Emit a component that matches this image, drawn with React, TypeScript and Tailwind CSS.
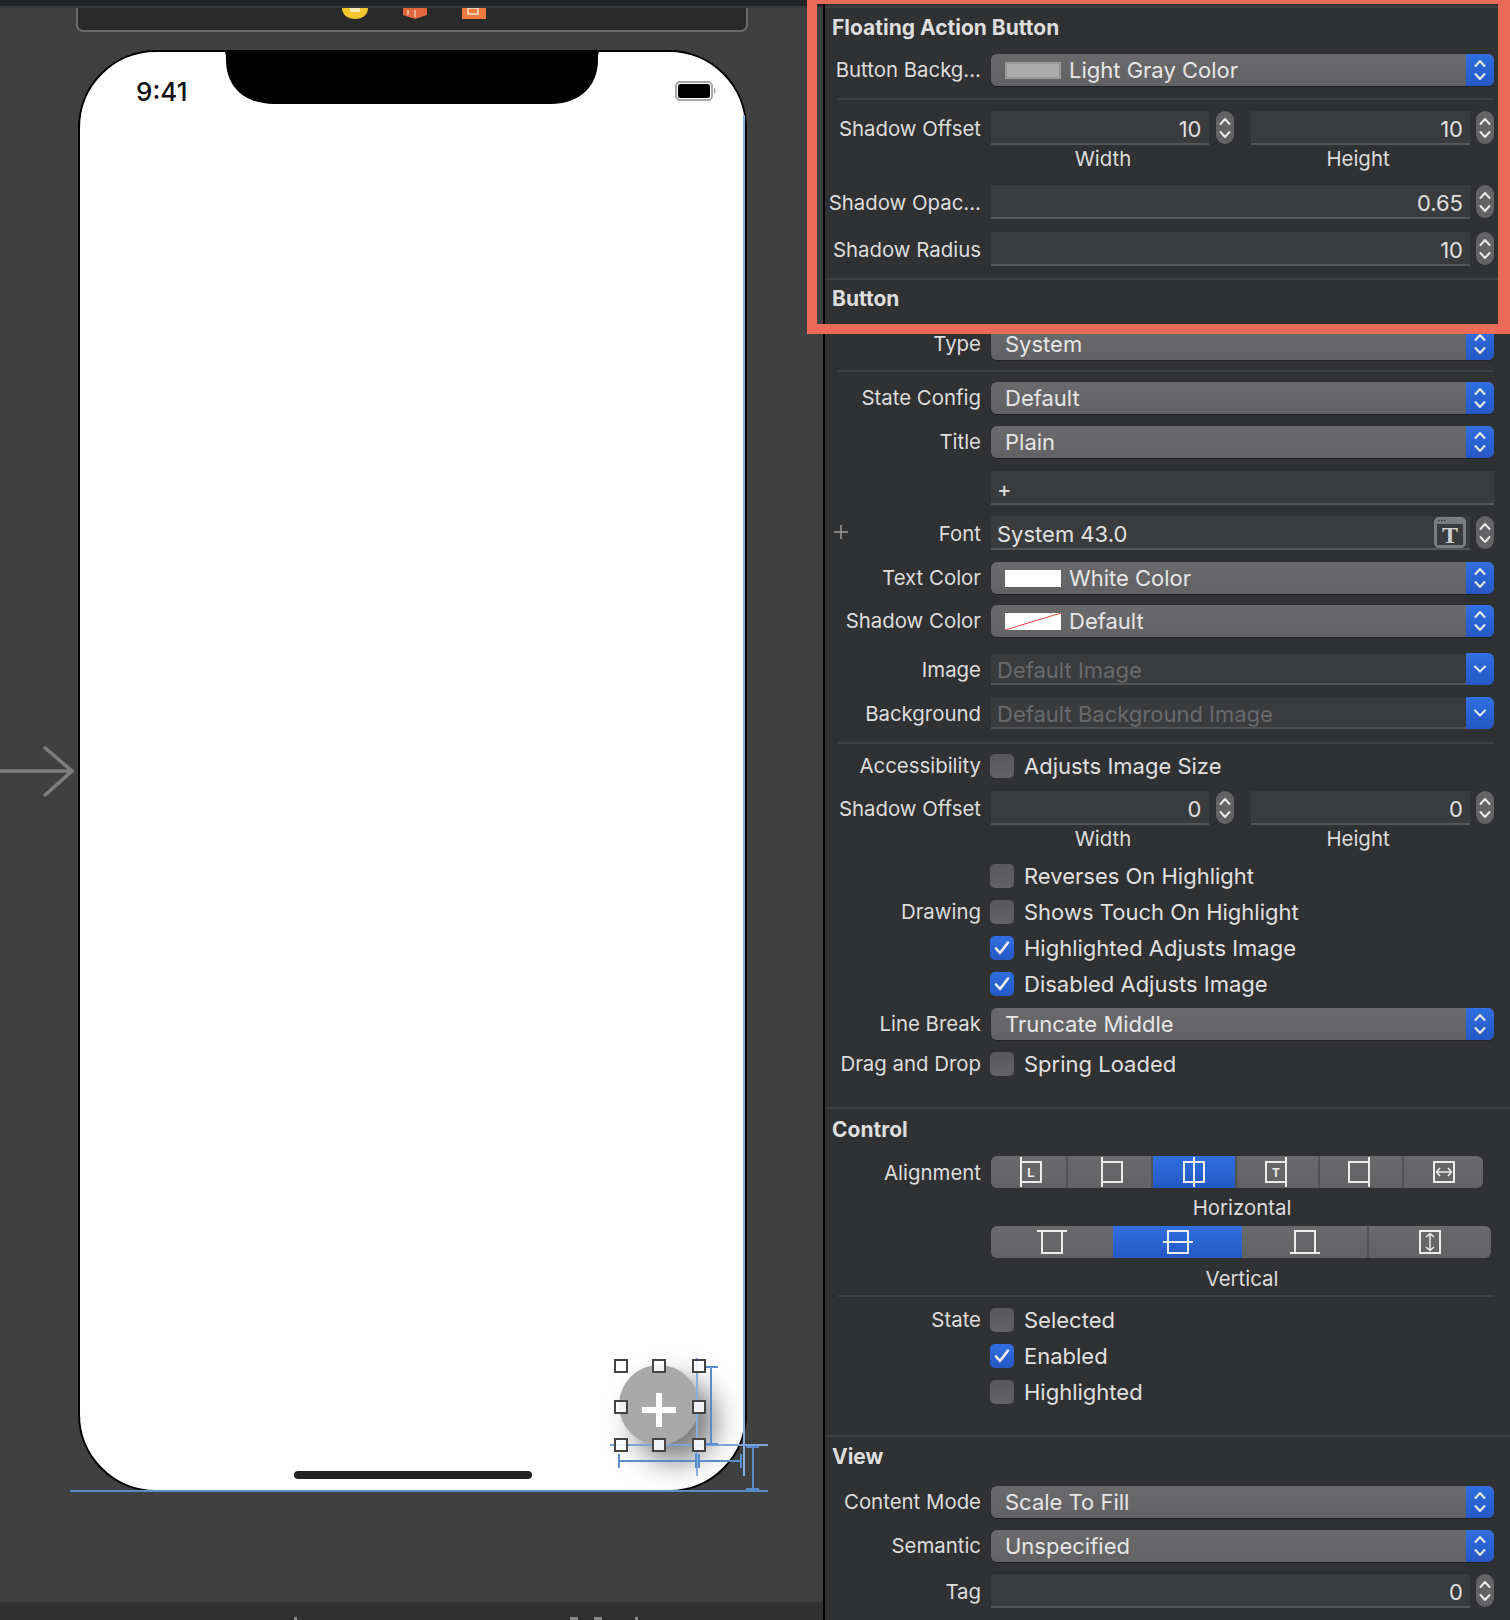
import React from "react";

const Chev = ({ className = "" }: { className?: string }) => (
  <svg width="14" height="26" viewBox="0 0 14 26" className={className} fill="none" stroke="#e8e8e8" strokeWidth="2" strokeLinecap="round" strokeLinejoin="round">
    <path d="M2.5 9 L7 4 L11.5 9" />
    <path d="M2.5 17 L7 22 L11.5 17" />
  </svg>
);

const Label = ({ children, lift }: { children?: React.ReactNode; lift?: boolean }) => (
  <div className={`w-[156px] shrink-0 text-right text-[20.4px] text-[#dddddd] whitespace-nowrap ${lift ? "pt-[3px]" : ""}`}>{children}</div>
);

const Row = ({ label, mt, h, lift, children }: { label?: string; mt: string; h: string; lift?: boolean; children?: React.ReactNode }) => (
  <div className={`flex items-center gap-[10px] pr-[16px] ${mt} ${h}`}>
    <Label lift={lift}>{label}</Label>
    <div className="flex-1 min-w-0 flex items-center">{children}</div>
  </div>
);

const Select = ({ text, swatch }: { text: string; swatch?: "gray" | "white" | "none" }) => (
  <div className="flex h-[32px] w-full rounded-[6px] overflow-hidden bg-gradient-to-b from-[#6a6a6c] to-[#626264] shadow-[0_1px_1px_rgba(0,0,0,0.3)]">
    <div className="flex-1 flex items-center pl-[14px] gap-[8px] text-[#e6e6e6]">
      {swatch === "gray" && <div className="w-[56px] h-[17px] bg-[#aaaaaa] border-2 border-[#999999]" />}
      {swatch === "white" && <div className="w-[56px] h-[17px] bg-white" />}
      {swatch === "none" && (
        <svg width="56" height="17" viewBox="0 0 56 17">
          <rect width="56" height="17" fill="#ffffff" />
          <path d="M0 17 L56 0" stroke="#e8493f" strokeWidth="1" />
        </svg>
      )}
      <span>{text}</span>
    </div>
    <div className="w-[28px] flex items-center justify-center bg-gradient-to-b from-[#2f6fe0] to-[#2558c4]">
      <Chev />
    </div>
  </div>
);

const ImageSelect = ({ text }: { text: string }) => (
  <div className="flex h-[32px] w-full">
    <div className="flex-1 flex items-center pl-[6px] pt-[3px] bg-[#3a3b3d] border-b-2 border-[#525355] border-t border-t-[#303133] text-[#696a6c]">{text}</div>
    <div className="w-[28px] flex items-center justify-center rounded-r-[6px] bg-gradient-to-b from-[#2f6fe0] to-[#2558c4]">
      <svg width="14" height="10" viewBox="0 0 14 10" fill="none" stroke="#e8e8e8" strokeWidth="2" strokeLinecap="round" strokeLinejoin="round">
        <path d="M2 2.5 L7 7.5 L12 2.5" />
      </svg>
    </div>
  </div>
);

const Stepper = () => (
  <div className="w-[18px] h-[33px] shrink-0 rounded-full bg-[#636365] flex items-center justify-center">
    <Chev />
  </div>
);

const Field = ({ value, align = "right", className = "", right }: { value: string; align?: "right" | "left"; className?: string; right?: React.ReactNode }) => (
  <div className={`h-[35px] flex items-center bg-[#3a3b3d] border-t border-[#2e2f31] border-b-2 border-b-[#555658] text-[#e0e0e0] ${align === "right" ? "justify-end pr-[7px]" : "pl-[6px] justify-between"} ${className}`}>
    <span className="pt-[3px]">{value}</span>
    {right}
  </div>
);

const WideStepField = ({ value }: { value: string }) => (
  <div className="flex w-full items-center gap-[6px]">
    <Field value={value} className="flex-1" />
    <Stepper />
  </div>
);

const PairField = ({ a, b }: { a: string; b: string }) => (
  <div className="flex w-full items-center">
    <Field value={a} className="w-[218px]" />
    <div className="ml-[7px]"><Stepper /></div>
    <Field value={b} className="w-[220px] ml-[17px]" />
    <div className="ml-[6px]"><Stepper /></div>
  </div>
);

const Caption = ({ a, b, mt }: { a: string; b: string; mt: string }) => (
  <div className={`flex h-[24px] items-center text-[20.4px] text-[#dddddd] ${mt}`}>
    <div className="w-[166px] shrink-0" />
    <div className="w-[224px] text-center">{a}</div>
    <div className="w-[38px]" />
    <div className="w-[210px] text-center">{b}</div>
  </div>
);

const Check = ({ on, label, mt, side }: { on?: boolean; label: string; mt: string; side?: string }) => (
  <div className={`flex h-[24px] items-center gap-[10px] ${mt}`}>
    <Label>{side}</Label>
    <div className={`w-[24px] h-[24px] -ml-[1px] rounded-[5px] flex items-center justify-center ${on ? "bg-gradient-to-b from-[#2f6fe0] to-[#2558c4]" : "bg-gradient-to-b from-[#59595b] to-[#626264]"}`}>
      {on && (
        <svg width="18" height="18" viewBox="0 0 18 18" fill="none" stroke="#f2f2f2" strokeWidth="2.6" strokeLinecap="round" strokeLinejoin="round">
          <path d="M3 9.5 L7 14 L15 3.5" />
        </svg>
      )}
    </div>
    <span className="text-[#e0e0e0]">{label}</span>
  </div>
);

const Divider = ({ mt, full }: { mt: string; full?: boolean }) =>
  full ? (
    <div className={`h-[2px] bg-[#3f4042] ${mt}`} />
  ) : (
    <div className={`h-[2px] bg-[#3f4042] ml-[13px] mr-[16px] ${mt}`} />
  );

const Heading = ({ text, mt }: { text: string; mt: string }) => (
  <div className={`h-[24px] pl-[7px] flex items-center text-[21px] font-bold text-[#dedede] ${mt}`}>{text}</div>
);

const A = ({ children }: { children: React.ReactNode }) => (
  <svg width="34" height="34" viewBox="0 0 34 34" fill="none" stroke="#ececec" strokeWidth="2">
    {children}
  </svg>
);

const Seg = ({ w, on, last, children }: { w: string; on?: boolean; last?: boolean; children: React.ReactNode }) => (
  <div className={`${w} flex items-center justify-center ${on ? "bg-gradient-to-b from-[#2f6fe0] to-[#2558c4]" : ""} ${last ? "" : "border-r-2 border-[#525254]"}`}>
    {children}
  </div>
);

const SmallLetter = ({ l, x }: { l: string; x: number }) => (
  <text x={x} y="21.5" fontSize="12" fontWeight="700" fill="#ececec" stroke="none" textAnchor="middle" fontFamily="Liberation Sans, sans-serif">{l}</text>
);

export default function App() {
  return (
    <div className="relative flex w-[1510px] h-[1620px] overflow-hidden bg-[#404040] font-['Inter','Liberation_Sans',sans-serif] text-[22px] leading-none">
      {/* Canvas */}
      <div className="relative w-[823px] h-[1620px] shrink-0 flex flex-col">
        <div className="h-[6px] bg-[#212325]" />
        <div className="h-[2px] bg-[#37383a]" />
        <div className="ml-[76px] w-[672px] h-[24px] overflow-hidden rounded-b-[7px] bg-[#2a2a2a] border-2 border-t-0 border-[#6a6a6a] flex justify-center">
          <svg width="170" height="12" viewBox="0 0 170 12" className="ml-[16px]">
            <path d="M7 0 H33 C33 7 27 11 20 11 C13 11 7 7 7 0Z" fill="#f2c52e" />
            <rect x="15" y="0" width="10" height="4" fill="#f4e9b0" />
            <path d="M68 0 H92 V7 L80 11 L68 7Z" fill="#e2673f" />
            <path d="M80 2 V9 M73 2 V7" stroke="#f3c4ad" strokeWidth="1.5" />
            <rect x="127" y="0" width="24" height="11" fill="#ee7b3f" />
            <rect x="133" y="0" width="10" height="6" fill="none" stroke="#fbe2d0" strokeWidth="1.5" />
          </svg>
        </div>
        <div className="relative ml-[78px] mt-[18px] w-[669px] h-[1442px] rounded-[78px] bg-white border-2 border-black flex flex-col justify-between">
          <div className="flex items-start justify-between pl-[56px] pr-[28px] pt-[26px]">
            <span className="text-[26px] leading-[28px] font-medium text-[#111111]">9:41</span>
            <svg width="42" height="20" viewBox="0 0 42 20" className="mt-[3px]">
              <rect x="1" y="1" width="36" height="18" rx="4" fill="#ffffff" stroke="#a8a8a8" strokeWidth="2" />
              <rect x="3" y="3" width="32" height="14" rx="2.5" fill="#000000" />
              <path d="M39 7 C41 8 41 12 39 13Z" fill="#999999" />
            </svg>
          </div>
          <div className="self-center w-[238px] h-[8px] mb-[11px] rounded-full bg-[#222222]" />
          {/* notch */}
          <svg width="384" height="54" viewBox="0 0 384 54" className="absolute left-[140px] top-[-2px]">
            <path d="M0 0 H384 C378 0 378 4 378 10 C378 36 360 54 330 54 H54 C24 54 6 36 6 10 C6 4 6 0 0 0Z" fill="#000000" />
          </svg>
          {/* FAB */}
          <div className="absolute left-[539px] top-[1313px] w-[80px] h-[80px] rounded-full bg-[#a9a9a9] shadow-[16px_16px_30px_rgba(0,0,0,0.55)]">
            <div className="absolute left-[23px] top-[42px] w-[34px] h-[6px] bg-white" />
            <div className="absolute left-[37px] top-[28px] w-[6px] h-[34px] bg-white" />
          </div>
        </div>
        <div className="mt-[110px] h-[18px] bg-[#303030]" />

        {/* constraints + handles overlay */}
        <svg width="823" height="1620" viewBox="0 0 823 1620" className="absolute left-0 top-0" fill="none">
          <path d="M0 771 H72 M44 747 L72 771 L44 796" stroke="#7e7e7e" strokeWidth="3.5" />
          <g stroke="#5a8ccb" strokeWidth="2">
            <path d="M744 115 V1476" stroke="#86aee0" />
            <path d="M70 1491 H768" />
            <path d="M610 1445 H768" stroke="#7ba3d8" />
            <path d="M697 1358 V1476" stroke="#86aee0" />
            <path d="M711 1367 V1444 M705 1367 H718 M705 1444 H718" />
            <path d="M619 1461 H695 M619 1454 V1468 M696 1454 V1468" />
            <path d="M699 1461 H741 M699 1454 V1468 M741 1454 V1468" />
            <path d="M753 1447 V1489 M746 1447 H759 M746 1489 H759" />
          </g>
          <g fill="#ffffff" fillOpacity="0.85" stroke="#444444" strokeWidth="2">
            {[621, 659, 699].flatMap((x) =>
              [1366, 1407, 1445].filter((y) => !(x === 659 && y === 1407)).map((y) => (
                <rect key={`${x}-${y}`} x={x - 6} y={y - 6} width="12" height="12" />
              ))
            )}
          </g>
          <g fill="#8a8a8a">
            <rect x="294" y="1617" width="3" height="3" />
            <rect x="570" y="1617" width="8" height="3" />
            <rect x="594" y="1617" width="8" height="3" />
            <rect x="635" y="1617" width="3" height="3" />
          </g>
        </svg>
      </div>

      {/* Inspector */}
      <div className="w-[687px] h-[1620px] shrink-0 bg-[#303133] border-l-2 border-black flex flex-col">
        <div className="mt-[6px] h-[2px] bg-[#3f4042]" />
        <Heading text="Floating Action Button" mt="mt-[7px]" />
        <Row label="Button Backg..." mt="mt-[15px]" h="h-[32px]"><Select text="Light Gray Color" swatch="gray" /></Row>
        <Divider mt="mt-[12px]" />
        <Row label="Shadow Offset" lift mt="mt-[10px]" h="h-[35px]"><PairField a="10" b="10" /></Row>
        <Caption a="Width" b="Height" mt="mt-[2px]" />
        <Row label="Shadow Opac..." lift mt="mt-[13px]" h="h-[35px]"><WideStepField value="0.65" /></Row>
        <Row label="Shadow Radius" lift mt="mt-[12px]" h="h-[35px]"><WideStepField value="10" /></Row>
        <Divider mt="mt-[12px]" full />
        <Heading text="Button" mt="mt-[6px]" />
        <Row label="Type" mt="mt-[18px]" h="h-[32px]"><Select text="System" /></Row>
        <Divider mt="mt-[10px]" />
        <Row label="State Config" mt="mt-[10px]" h="h-[32px]"><Select text="Default" /></Row>
        <Row label="Title" mt="mt-[12px]" h="h-[32px]"><Select text="Plain" /></Row>
        <Row mt="mt-[12px]" h="h-[35px]"><Field value="+" align="left" className="w-full" /></Row>
        <div className="relative">
          <Row label="Font" lift mt="mt-[10px]" h="h-[35px]">
            <div className="flex w-full items-center gap-[6px]">
              <Field
                value="System 43.0"
                align="left"
                className="flex-1"
                right={
                  <svg width="32" height="33" viewBox="0 0 32 33" className="mr-[4px]">
                    <rect x="0" y="1" width="32" height="31" rx="5" fill="#7b7c7e" />
                    <rect x="3" y="8" width="26" height="21" fill="#3a3b3d" />
                    <path d="M4 4.5 H5.5 M7 4.5 H8.5 M10 4.5 H11.5" stroke="#3a3b3d" strokeWidth="1.5" />
                    <text x="16" y="27" fontSize="24" fontWeight="700" fill="#cfcfcf" textAnchor="middle" fontFamily="Liberation Serif, serif">T</text>
                  </svg>
                }
              />
              <Stepper />
            </div>
          </Row>
          <svg width="16" height="16" viewBox="0 0 16 16" className="absolute left-[8px] top-[19px]" stroke="#9a9a9a" strokeWidth="1.5">
            <path d="M8 1 V15 M1 8 H15" />
          </svg>
        </div>
        <Row label="Text Color" mt="mt-[12px]" h="h-[32px]"><Select text="White Color" swatch="white" /></Row>
        <Row label="Shadow Color" mt="mt-[11px]" h="h-[32px]"><Select text="Default" swatch="none" /></Row>
        <Row label="Image" lift mt="mt-[16px]" h="h-[32px]"><ImageSelect text="Default Image" /></Row>
        <Row label="Background" lift mt="mt-[12px]" h="h-[32px]"><ImageSelect text="Default Background Image" /></Row>
        <Divider mt="mt-[13px]" />
        <Check side="Accessibility" label="Adjusts Image Size" mt="mt-[10px]" />
        <Row label="Shadow Offset" lift mt="mt-[12px]" h="h-[35px]"><PairField a="0" b="0" /></Row>
        <Caption a="Width" b="Height" mt="mt-[2px]" />
        <Check label="Reverses On Highlight" mt="mt-[13px]" />
        <Check side="Drawing" label="Shows Touch On Highlight" mt="mt-[12px]" />
        <Check on label="Highlighted Adjusts Image" mt="mt-[12px]" />
        <Check on label="Disabled Adjusts Image" mt="mt-[12px]" />
        <Row label="Line Break" mt="mt-[12px]" h="h-[32px]"><Select text="Truncate Middle" /></Row>
        <Check side="Drag and Drop" label="Spring Loaded" mt="mt-[12px]" />
        <Divider mt="mt-[31px]" full />
        <Heading text="Control" mt="mt-[8px]" />
        <Row label="Alignment" lift mt="mt-[15px]" h="h-[32px]">
          <div className="flex w-[492px] h-[32px] rounded-[6px] overflow-hidden bg-gradient-to-b from-[#6a6a6c] to-[#626264] text-white">
            <Seg w="w-[77px]">
              <A><rect x="9" y="7" width="20" height="20" /><path d="M9 2 V32" /><SmallLetter l="L" x="19" /></A>
            </Seg>
            <Seg w="w-[85px]">
              <A><rect x="9" y="7" width="20" height="20" /><path d="M9 2 V32" /></A>
            </Seg>
            <Seg w="w-[84px]" on>
              <A><rect x="7" y="7" width="20" height="20" /><path d="M17 2 V32" /></A>
            </Seg>
            <Seg w="w-[83px]">
              <A><rect x="5" y="7" width="20" height="20" /><path d="M25 2 V32" /><SmallLetter l="T" x="15" /></A>
            </Seg>
            <Seg w="w-[84px]">
              <A><rect x="5" y="7" width="20" height="20" /><path d="M25 2 V32" /></A>
            </Seg>
            <Seg w="w-[79px]" last>
              <A><rect x="7" y="7" width="20" height="20" /><path d="M10 17 H24 M13 13 L9.5 17 L13 21 M21 13 L24.5 17 L21 21" strokeWidth="1.5" /></A>
            </Seg>
          </div>
        </Row>
        <div className="mt-[8px] h-[24px] flex items-center text-[20.4px] text-[#dddddd]">
          <div className="w-[166px] shrink-0" />
          <div className="w-[502px] text-center">Horizontal</div>
        </div>
        <Row mt="mt-[6px]" h="h-[32px]">
          <div className="flex w-[500px] h-[32px] rounded-[6px] overflow-hidden bg-gradient-to-b from-[#6a6a6c] to-[#626264]">
            <Seg w="w-[122px]" last>
              <A><rect x="7" y="6" width="20" height="22" /><path d="M2 6 H32" /></A>
            </Seg>
            <Seg w="w-[129px]" on last>
              <A><rect x="7" y="6" width="20" height="22" /><path d="M2 17 H32" /></A>
            </Seg>
            <Seg w="w-[127px]">
              <A><rect x="7" y="6" width="20" height="22" /><path d="M2 28 H32" /></A>
            </Seg>
            <Seg w="w-[122px]" last>
              <A><rect x="7" y="6" width="20" height="22" /><path d="M17 9 V25 M13 12 L17 8.5 L21 12 M13 22 L17 25.5 L21 22" strokeWidth="1.5" /></A>
            </Seg>
          </div>
        </Row>
        <div className="mt-[9px] h-[24px] flex items-center text-[20.4px] text-[#dddddd]">
          <div className="w-[166px] shrink-0" />
          <div className="w-[502px] text-center">Vertical</div>
        </div>
        <Divider mt="mt-[4px]" />
        <Check side="State" label="Selected" mt="mt-[11px]" />
        <Check on label="Enabled" mt="mt-[12px]" />
        <Check label="Highlighted" mt="mt-[12px]" />
        <Divider mt="mt-[31px]" full />
        <Heading text="View" mt="mt-[7px]" />
        <Row label="Content Mode" mt="mt-[18px]" h="h-[32px]"><Select text="Scale To Fill" /></Row>
        <Row label="Semantic" mt="mt-[12px]" h="h-[32px]"><Select text="Unspecified" /></Row>
        <Row label="Tag" lift mt="mt-[11px]" h="h-[35px]"><WideStepField value="0" /></Row>
      </div>

      {/* Annotation frame */}
      <div className="absolute left-[807px] top-0 w-[703px] h-[334px] border-t-4 border-l-[10px] border-r-[12px] border-b-[10px] border-[#ec6a58]" />
    </div>
  );
}
